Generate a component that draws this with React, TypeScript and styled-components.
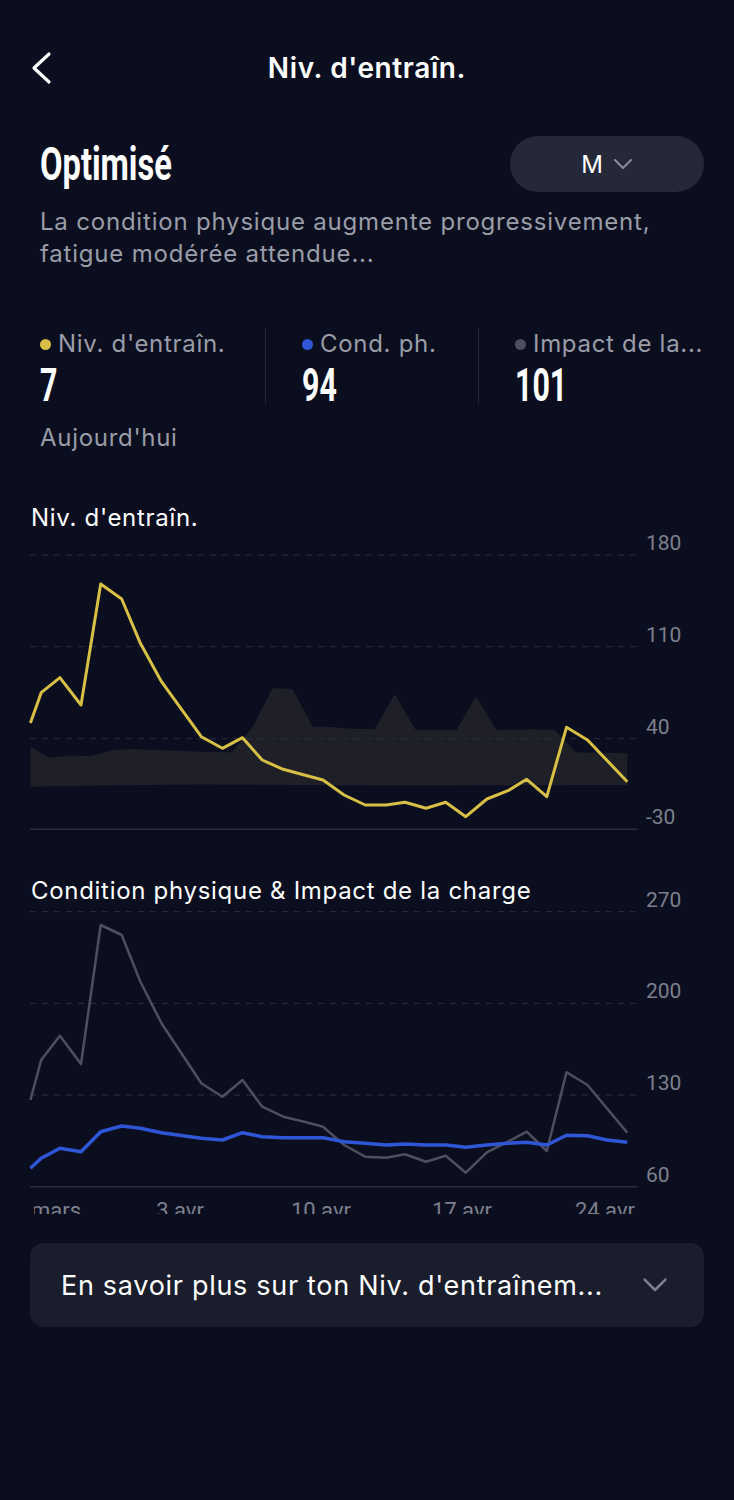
import React from 'react';
import styled, { createGlobalStyle } from 'styled-components';

const Color = {
  Page: '#0a0e1f',
  White: '#ffffff',
  Muted: '#9a9da8',
  Axis: '#7d808c',
  Pill: '#252838',
  Card: '#1a1d2c',
  Divider: '#232738',
  Grid: '#2a2e3e',
  Band: '#1f2027',
  Yellow: '#d8bf45',
  Blue: '#2f56d6',
  Slate: '#4d505c',
};

const BODY_FONT = `Inter, Roboto, "Liberation Sans", sans-serif`;
const DISPLAY_FONT = `Roboto, "Liberation Sans", sans-serif`;

const GlobalStyle = createGlobalStyle`
  html, body {
    margin: 0;
    background: ${Color.Page};
  }
  body {
    font-family: ${BODY_FONT};
    color: ${Color.White};
  }
`;

const Page = styled.div`
  width: 734px;
  min-height: 1500px;
  background: ${Color.Page};
  display: flex;
  flex-direction: column;
`;

const Header = styled.header`
  height: 136px;
  display: grid;
  grid-template-columns: 80px 1fr 80px;
  align-items: center;
`;

const BackButton = styled.button`
  background: none;
  border: 0;
  padding: 0 0 0 30px;
  height: 40px;
  display: flex;
  align-items: center;
  cursor: pointer;
`;

const HeaderTitle = styled.h1`
  margin: 0;
  text-align: center;
  font-size: 28px;
  font-weight: 600;
  letter-spacing: 0.6px;
`;

const Summary = styled.section`
  padding: 0 30px 0 40px;
`;

const SummaryTop = styled.div`
  display: flex;
  align-items: center;
  justify-content: space-between;
  height: 56px;
`;

/* condensed display face is not installed, so squeeze a regular bold one */
const Condensed = styled.span<{ $size: number; $squeeze: number }>`
  display: inline-block;
  font-family: ${DISPLAY_FONT};
  font-size: ${(p) => p.$size}px;
  line-height: ${(p) => p.$size}px;
  font-weight: 700;
  transform: scaleX(${(p) => p.$squeeze});
  transform-origin: left center;
`;

const Status = styled.h2`
  margin: 0;
  font-weight: 700;
`;

const PeriodPill = styled.button`
  width: 194px;
  height: 56px;
  border: 0;
  border-radius: 28px;
  background: ${Color.Pill};
  color: ${Color.White};
  font-family: ${BODY_FONT};
  font-size: 24px;
  display: flex;
  align-items: center;
  justify-content: center;
  gap: 10px;
  padding: 0;
`;

const Description = styled.p`
  margin: 14px 0 0;
  font-size: 24px;
  line-height: 32px;
  letter-spacing: 0.8px;
  color: ${Color.Muted};
`;

const Stats = styled.div`
  display: grid;
  grid-template-columns: 225px 1px 212px 1px 1fr;
  margin-top: 58px;
  height: 76px;
`;

const Stat = styled.div<{ $first?: boolean }>`
  padding-left: ${(p) => (p.$first ? '0' : '36px')};
  display: flex;
  flex-direction: column;
  min-width: 0;
`;

const Divider = styled.div`
  background: ${Color.Divider};
  height: 76px;
`;

const StatLabel = styled.div`
  display: flex;
  align-items: center;
  gap: 7px;
  font-size: 24px;
  line-height: 32px;
  letter-spacing: 0.7px;
  color: ${Color.Muted};
  white-space: nowrap;
`;

const Dot = styled.span<{ $color: string }>`
  width: 11px;
  height: 11px;
  border-radius: 50%;
  background: ${(p) => p.$color};
  flex-shrink: 0;
`;

const StatValue = styled.div`
  margin-top: 2px;
  height: 44px;
`;

const Caption = styled.div`
  margin-top: 18px;
  font-size: 24px;
  line-height: 32px;
  letter-spacing: 0.7px;
  color: ${Color.Muted};
`;

const ChartSection = styled.section<{ $top: number }>`
  margin-top: ${(p) => p.$top}px;
`;

const ChartTitle = styled.h3`
  margin: 0;
  padding-left: 31px;
  font-size: 24px;
  line-height: 32px;
  font-weight: 400;
  letter-spacing: 0.7px;
`;

const ChartSvg = styled.svg`
  display: block;
  overflow: visible;
`;

const LearnMore = styled.button`
  margin: 29px 30px 0;
  height: 84px;
  border: 0;
  border-radius: 14px;
  background: ${Color.Card};
  color: ${Color.White};
  font-family: ${BODY_FONT};
  font-size: 27px;
  letter-spacing: 0.7px;
  display: flex;
  align-items: center;
  justify-content: space-between;
  padding: 0 36px 0 31px;
  cursor: pointer;
`;

const Chevron = ({ size, color }: { size: number; color: string }) => (
  <svg width={size} height={size * 0.6} viewBox="0 0 20 12" fill="none">
    <path d="M2 2l8 8 8-8" stroke={color} strokeWidth="2" strokeLinecap="round" strokeLinejoin="round" />
  </svg>
);

const toPoints = (pts: number[][], dy: number) => pts.map(([x, y]) => `${x},${(y - dy).toFixed(1)}`).join(' ');

const TRAINING = [
  [30.4, 723], [41.2, 692.7], [59.9, 677.7], [81, 705], [100.7, 584], [121.7, 599], [140.4, 643.3],
  [161.5, 681.7], [201.3, 736.7], [222.4, 748.3], [242.5, 737.7], [262.2, 760], [283.2, 769.3],
  [304.3, 775], [323, 780], [344.1, 795], [365.2, 805], [386.2, 805], [405, 802.3], [426, 808.3],
  [445.7, 802.3], [465.8, 816.7], [486.9, 799], [508, 790.7], [526.7, 779.3], [546.8, 796.7],
  [566.5, 727.3], [587.5, 740], [627.3, 781.7],
];

const BAND_TOP = [
  [30.4, 746.7], [49.2, 757.7], [70.2, 755.7], [91.3, 756], [112.4, 750], [133.4, 749], [154.5, 750],
  [177.9, 750.7], [201.3, 751.7], [222.4, 752.3], [231.7, 752.3], [252.8, 726.7], [272.5, 688.3],
  [292.6, 689], [312.7, 726.7], [332.4, 727], [351.1, 728.7], [374.5, 729.3], [394.7, 694.3],
  [415.7, 730], [435.4, 730], [456.5, 730], [476.1, 696.7], [496.3, 730], [515, 729.7], [533.7, 729.3],
  [554.8, 730], [575.8, 752.3], [599.3, 752.7], [627.3, 753.3],
];

const BAND_BOTTOM = [
  [627.3, 785], [400, 785.5], [300, 785], [200, 784.5], [100, 785.5], [30.4, 786.7],
];

const LOAD_IMPACT = [
  [30.4, 1100], [41.2, 1060], [59.9, 1035.7], [81, 1064], [100.7, 925], [121.7, 935], [140.4, 981.7],
  [161.5, 1023.3], [201.3, 1083.3], [222.4, 1096.7], [242.5, 1080], [262.2, 1106.7], [283.2, 1116.7],
  [304.3, 1121.7], [323, 1126.7], [344.1, 1145], [365.2, 1156.7], [386.2, 1157.7], [405, 1154.3],
  [426, 1161.7], [445.7, 1155.7], [465.8, 1172.7], [486.9, 1152.3], [508, 1141.7], [526.7, 1131.7],
  [546.8, 1151], [566.5, 1072.3], [587.5, 1085], [627.3, 1132.7],
];

const FITNESS = [
  [30.4, 1168.3], [41.2, 1158.3], [59.9, 1148.3], [81, 1151.7], [100.7, 1131.7], [121.7, 1126],
  [140.4, 1128.3], [161.5, 1132.7], [201.3, 1138.3], [222.4, 1140], [242.5, 1132.7], [262.2, 1136.7],
  [283.2, 1137.7], [304.3, 1137.7], [323, 1137.7], [344.1, 1141.7], [365.2, 1143.3], [386.2, 1145],
  [405, 1144], [426, 1145], [445.7, 1145], [465.8, 1147.3], [486.9, 1145], [508, 1143.3], [526.7, 1142.3],
  [546.8, 1145], [566.5, 1135.3], [587.5, 1135.7], [607, 1140], [627.3, 1142.3],
];

interface Tick {
  label: string;
  y: number;
}

const Grid = ({ ticks, dy }: { ticks: Tick[]; dy: number }) => (
  <g>
    {ticks.map((t, i) => {
      const y = t.y - dy;
      const last = i === ticks.length - 1;
      return (
        <g key={t.label}>
          <line
            x1={30}
            x2={637}
            y1={y}
            y2={y}
            stroke={Color.Grid}
            strokeWidth={last ? 1.5 : 1}
            strokeDasharray={last ? undefined : '6 6'}
          />
          <text
            x={646}
            y={y - 12}
            dominantBaseline="central"
            fill={Color.Axis}
            fontSize={21}
            fontFamily={DISPLAY_FONT}
          >
            {t.label}
          </text>
        </g>
      );
    })}
  </g>
);

const TrainingChart = () => {
  const dy = 534;
  const band = toPoints([...BAND_TOP, ...BAND_BOTTOM], dy);
  return (
    <ChartSvg width={734} height={300}>
      <polygon points={band} fill={Color.Band} />
      <Grid
        dy={dy}
        ticks={[
          { label: '180', y: 555 },
          { label: '110', y: 646.7 },
          { label: '40', y: 738.7 },
          { label: '-30', y: 829.3 },
        ]}
      />
      <polyline
        points={toPoints(TRAINING, dy)}
        fill="none"
        stroke={Color.Yellow}
        strokeWidth={3}
        strokeLinejoin="round"
      />
    </ChartSvg>
  );
};

const DATE_LABELS = [
  { label: 'mars', x: 56 },
  { label: '3 avr', x: 180 },
  { label: '10 avr', x: 321 },
  { label: '17 avr', x: 462 },
  { label: '24 avr', x: 605 },
];

const FitnessChart = () => {
  const dy = 907;
  return (
    <ChartSvg width={734} height={307}>
      <defs>
        <clipPath id="date-clip">
          <rect x={34} y={270} width={700} height={37} />
        </clipPath>
      </defs>
      <Grid
        dy={dy}
        ticks={[
          { label: '270', y: 911.7 },
          { label: '200', y: 1003.3 },
          { label: '130', y: 1095 },
          { label: '60', y: 1186.7 },
        ]}
      />
      <polyline
        points={toPoints(LOAD_IMPACT, dy)}
        fill="none"
        stroke={Color.Slate}
        strokeWidth={2.5}
        strokeLinejoin="round"
      />
      <polyline
        points={toPoints(FITNESS, dy)}
        fill="none"
        stroke={Color.Blue}
        strokeWidth={3.5}
        strokeLinejoin="round"
      />
      <g clipPath="url(#date-clip)">
        {DATE_LABELS.map((d) => (
          <text
            key={d.label}
            x={d.x}
            y={1210 - dy}
            textAnchor="middle"
            dominantBaseline="central"
            fill={Color.Axis}
            fontSize={22}
            fontFamily={DISPLAY_FONT}
          >
            {d.label}
          </text>
        ))}
      </g>
    </ChartSvg>
  );
};

const STATS = [
  { label: "Niv. d'entraîn.", value: '7', color: Color.Yellow },
  { label: 'Cond. ph.', value: '94', color: Color.Blue },
  { label: 'Impact de la...', value: '101', color: Color.Slate },
];

export default function App() {
  return (
    <Page>
      <GlobalStyle />
      <Header>
        <BackButton aria-label="Retour">
          <svg width="24" height="36" viewBox="0 0 24 36" fill="none">
            <path d="M19 4L4 18l15 14" stroke={Color.White} strokeWidth="3.2" strokeLinecap="round" strokeLinejoin="round" />
          </svg>
        </BackButton>
        <HeaderTitle>Niv. d'entraîn.</HeaderTitle>
        <span />
      </Header>

      <Summary>
        <SummaryTop>
          <Status>
            <Condensed $size={46} $squeeze={0.71}>Optimisé</Condensed>
          </Status>
          <PeriodPill>
            M
            <Chevron size={20} color="#8a8d99" />
          </PeriodPill>
        </SummaryTop>
        <Description>
          La condition physique augmente progressivement,
          <br />
          fatigue modérée attendue...
        </Description>

        <Stats>
          {STATS.map((s, i) => (
            <React.Fragment key={s.label}>
              {i > 0 && <Divider />}
              <Stat $first={i === 0}>
                <StatLabel>
                  <Dot $color={s.color} />
                  {s.label}
                </StatLabel>
                <StatValue>
                  <Condensed $size={46} $squeeze={0.66}>{s.value}</Condensed>
                </StatValue>
              </Stat>
            </React.Fragment>
          ))}
        </Stats>
        <Caption>Aujourd'hui</Caption>
      </Summary>

      <ChartSection $top={48}>
        <ChartTitle>Niv. d'entraîn.</ChartTitle>
        <TrainingChart />
      </ChartSection>

      <ChartSection $top={41}>
        <ChartTitle>Condition physique &amp; Impact de la charge</ChartTitle>
        <FitnessChart />
      </ChartSection>

      <LearnMore>
        En savoir plus sur ton Niv. d'entraînem...
        <Chevron size={26} color="#7d808c" />
      </LearnMore>
    </Page>
  );
}
